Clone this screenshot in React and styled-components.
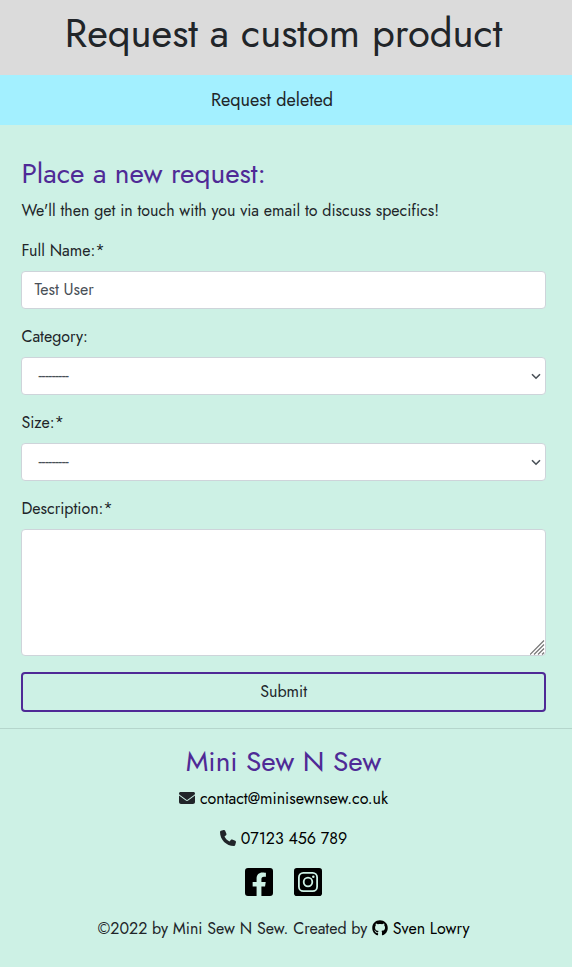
import React from "react";
import styled, { createGlobalStyle, css } from "styled-components";
import { FaEnvelope, FaPhone, FaGithub } from "react-icons/fa6";
import { FaFacebookSquare } from "react-icons/fa";

const GlobalStyle = createGlobalStyle`
  *, *::before, *::after { box-sizing: border-box; }
  body {
    margin: 0;
    background: #cdf1e5;
    color: #212529;
    font: 400 16px/1.5 Jost, Lato, sans-serif;
  }
`;

const Page = styled.div`
  min-height: 967px;
  overflow: hidden;
`;

const Header = styled.header`
  height: 75px;
  padding: 9px 5px 0 0;
  background: #dbdbdb;
  text-align: center;
`;

const Title = styled.h1`
  margin: 0;
  font-size: 40px;
  font-weight: 400;
  line-height: 48px;
`;

const Message = styled.div`
  display: flex;
  align-items: center;
  justify-content: center;
  height: 50px;
  padding-right: 28px;
  background: #a3f0ff;
  font-size: 18px;
`;

const Heading = styled.h2`
  margin: 0 0 8px;
  color: #4f2a96;
  font-size: 28px;
  font-weight: 400;
  line-height: 33.6px;
`;

const Form = styled.form`
  display: flex;
  flex-direction: column;
  margin: 32.4px 26px 16px 21.45px;
`;

const Text = styled.p`
  margin: 0 0 16px;
`;

const Field = styled.div`
  display: flex;
  flex-direction: column;
  gap: 8px;
  margin-bottom: 16px;
`;

const control = css`
  display: block;
  width: 100%;
  height: 38px;
  margin: 0;
  padding: 6px 12px;
  border: 1px solid #ced4da;
  border-radius: 4px;
  background: #fff;
  color: #495057;
  font: inherit;
`;

const Input = styled.input`${control}`;

const Select = styled.select`
  ${control}
  appearance: none;
  padding: 6px 16px;
`;

const TextArea = styled.textarea`
  ${control}
  height: 127px;
  resize: none;
`;

const ControlWrap = styled.div`
  position: relative;
`;

const Chevron = styled.svg`
  position: absolute;
  right: 5px;
  top: 16px;
  width: 10px;
  height: 7px;
  fill: none;
  stroke: #495057;
  stroke-width: 1.6;
  pointer-events: none;
`;

const Grip = styled.svg`
  position: absolute;
  right: 1px;
  bottom: 1px;
  width: 15px;
  height: 15px;
  fill: none;
  stroke: #777;
  stroke-width: 1.2;
  pointer-events: none;
`;

const Submit = styled.button`
  height: 40px;
  padding: 0;
  border: 2px solid #4f2a96;
  border-radius: 4px;
  background: transparent;
  color: #212529;
  font: inherit;
`;

const Footer = styled.footer`
  padding: 16px 5px 0 0;
  border-top: 1px solid #b5d6cc;
  text-align: center;
`;

const Link = styled.a`
  color: #000;
  text-decoration: none;
`;

const Glyph = styled.span`
  svg {
    width: 16px;
    height: 16px;
    vertical-align: -2px;
  }
`;

const Social = styled.div`
  display: flex;
  justify-content: center;
  gap: 17px;
  height: 34px;
  margin: -1px 0 17px;

  svg {
    display: block;
    width: 32px;
    height: 32px;
  }
`;

function InstagramSquare() {
  return (
    <svg viewBox="-2 -2 32 32" fill="none" stroke="#cdf1e5" strokeWidth="1.8">
      <rect width="28" height="28" rx="2.8" fill="#000" stroke="none" />
      <rect x="4.9" y="4.9" width="18.2" height="18.2" rx="4.4" />
      <circle cx="14" cy="14" r="4.3" />
      <circle cx="19.3" cy="8.7" r="1.25" fill="#cdf1e5" stroke="none" />
    </svg>
  );
}

function SelectField({ label, name }) {
  return (
    <Field>
      <label htmlFor={name}>{label}</label>
      <ControlWrap>
        <Select id={name}>
          <option>---------</option>
        </Select>
        <Chevron viewBox="0 0 10 7">
          <path d="M1 1.2L5 5.2L9 1.2" />
        </Chevron>
      </ControlWrap>
    </Field>
  );
}

export default function App() {
  return (
    <Page>
      <GlobalStyle />
      <Header>
        <Title>Request a custom product</Title>
      </Header>
      <Message>Request deleted</Message>
      <Form>
        <Heading>Place a new request:</Heading>
        <Text>We'll then get in touch with you via email to discuss specifics!</Text>
        <Field>
          <label htmlFor="name">Full Name:*</label>
          <Input id="name" defaultValue="Test User" />
        </Field>
        <SelectField label="Category:" name="category" />
        <SelectField label="Size:*" name="size" />
        <Field>
          <label htmlFor="description">Description:*</label>
          <ControlWrap>
            <TextArea id="description" />
            <Grip viewBox="0 0 15 15">
              <path d="M0 14.5L14 .5M4 14.5L14 4.5M8 14.5L14 8.5M12 14.5L14 12.5" />
            </Grip>
          </ControlWrap>
        </Field>
        <Submit type="button">Submit</Submit>
      </Form>
      <Footer>
        <Heading>Mini Sew N Sew</Heading>
        <Text>
          <Glyph><FaEnvelope /></Glyph> <Link href="#">contact@minisewnsew.co.uk</Link>
        </Text>
        <Text>
          <Glyph><FaPhone /></Glyph> <Link href="#">07123 456 789</Link>
        </Text>
        <Social>
          <Link href="#"><FaFacebookSquare /></Link>
          <Link href="#"><InstagramSquare /></Link>
        </Social>
        <Text>
          ©2022 by Mini Sew N Sew. Created by <Link href="#"><Glyph><FaGithub /></Glyph> Sven Lowry</Link>
        </Text>
      </Footer>
    </Page>
  );
}
